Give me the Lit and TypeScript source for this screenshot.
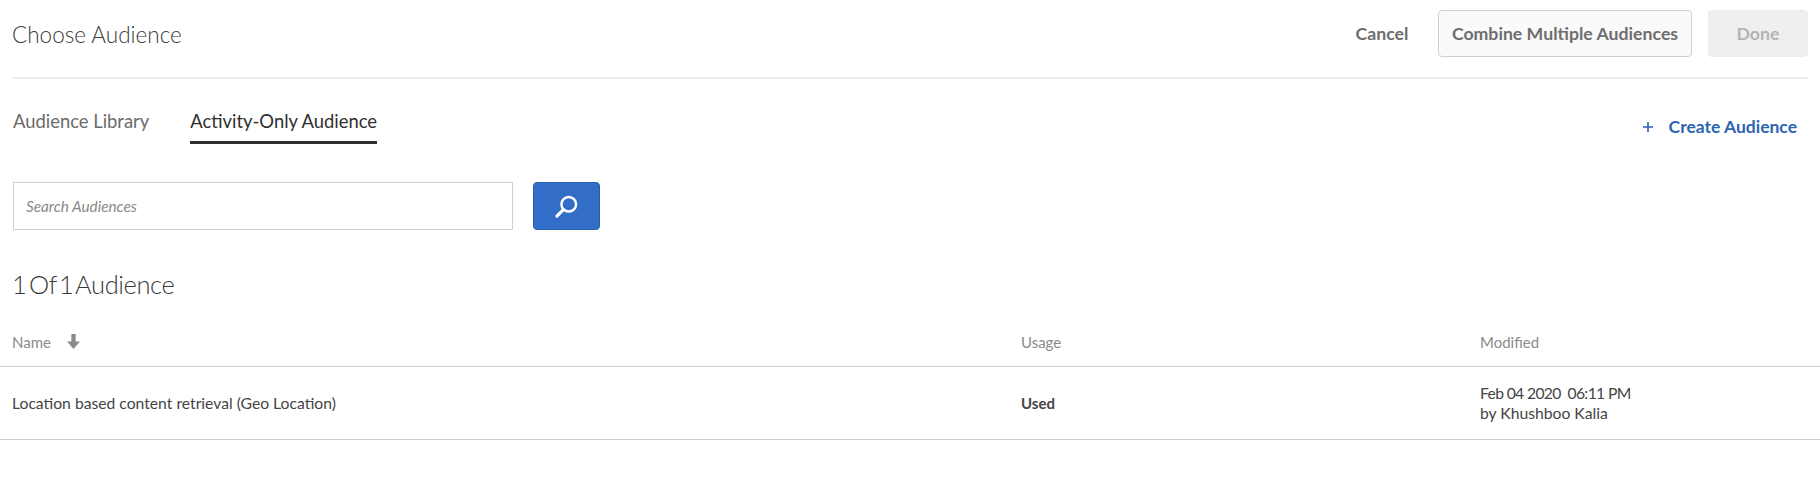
import { LitElement, css, html } from 'lit';
import { customElement } from 'lit/decorators.js';

@customElement('app-root')
export class AppRoot extends LitElement {
  static styles = css`
    :host {
      display: block;
      width: 1820px;
      height: 496px;
      background: #fff;
      font-family: 'Lato', 'Noto Sans', sans-serif;
      color: #4b4b4b;
      overflow: hidden;
    }
    .top {
      margin: 0 12px 0 12px;
      height: 79px;
      box-sizing: border-box;
      padding-top: 10px;
      border-bottom: 2px solid #eeeeee;
      display: flex;
      align-items: flex-start;
    }
    h1 {
      margin: 0;
      font-size: 22.5px;
      font-weight: 300;
      line-height: 50px;
      color: #3a3a3a;
      flex: 1;
    }
    .btn {
      box-sizing: border-box;
      height: 47px;
      border-radius: 4px;
      font-family: inherit;
      font-size: 17.7px;
      font-weight: 700;
      padding: 0;
      display: flex;
      align-items: center;
      justify-content: center;
    }
    .cancel {
      border: 0;
      background: none;
      color: #6e6e6e;
      width: 52px;
      margin-right: 30px;
    }
    .combine {
      width: 254px;
      margin-right: 16px;
      border: 1px solid #cfcfcf;
      background: #fafafa;
      color: #6e6e6e;
    }
    .done {
      width: 100px;
      border: 1px solid #ececec;
      background: #efefef;
      color: #b3b3b3;
    }
    .tabs {
      margin: 0 23px 0 13px;
      height: 66px;
      display: flex;
      align-items: flex-start;
    }
    .tab {
      font-size: 18.4px;
      line-height: 28px;
      margin-top: 28px;
      height: 37px;
      box-sizing: border-box;
      color: #6b6b6b;
    }
    .tab + .tab {
      margin-left: 41px;
      color: #2f2f2f;
      border-bottom: 3px solid #2f2f2f;
    }
    .create {
      margin-left: auto;
      margin-top: 34px;
      display: flex;
      align-items: center;
      gap: 16px;
      font-size: 17.5px;
      font-weight: 700;
      line-height: 28px;
      color: #2d63b3;
    }
    .search {
      margin: 37px 0 0 13px;
      display: flex;
      gap: 20px;
    }
    .field {
      box-sizing: border-box;
      width: 500px;
      height: 48px;
      border: 1px solid #cfcfcf;
      padding: 0 12px;
      display: flex;
      align-items: center;
      font-size: 15.3px;
      font-style: italic;
      color: #8a8a8a;
    }
    .go {
      box-sizing: border-box;
      width: 67px;
      height: 48px;
      border-radius: 4px;
      border: 1px solid #2a5fb0;
      background: #326ec8;
      display: flex;
      align-items: center;
      justify-content: center;
      padding: 0;
    }
    h2 {
      margin: 36px 0 0 12px;
      font-size: 25.5px;
      font-weight: 300;
      letter-spacing: -0.4px;
      word-spacing: -4px;
      line-height: 36px;
      color: #3a3a3a;
    }
    .row {
      display: grid;
      grid-template-columns: 1009px 459px 1fr;
      padding-left: 12px;
      box-sizing: border-box;
      align-items: center;
      border-bottom: 1px solid #cfcfcf;
    }
    .head {
      height: 65px;
      padding-top: 15px;
      font-size: 15px;
      color: #8a8a8a;
    }
    .body {
      height: 73px;
      font-size: 15.7px;
      line-height: 20px;
      color: #444;
    }
    .name {
      display: flex;
      align-items: center;
      gap: 16px;
    }
    .used {
      font-weight: 700;
      font-size: 15px;
    }
    .date {
      letter-spacing: -0.65px;
    }
  `;

  render() {
    return html`
      <div class="top">
        <h1>Choose Audience</h1>
        <button class="btn cancel">Cancel</button>
        <button class="btn combine">Combine Multiple Audiences</button>
        <button class="btn done">Done</button>
      </div>
      <div class="tabs">
        <div class="tab">Audience Library</div>
        <div class="tab">Activity-Only Audience</div>
        <div class="create">
          <svg width="10" height="10" viewBox="0 0 10 10">
            <path d="M5 0v10M0 5h10" stroke="#2d63b3" stroke-width="1.6" fill="none" />
          </svg>
          <span>Create Audience</span>
        </div>
      </div>
      <div class="search">
        <div class="field">Search Audiences</div>
        <button class="go" aria-label="Search">
          <svg width="27" height="27" viewBox="0 0 24 24" fill="none" stroke="#fff" stroke-linecap="round">
            <circle cx="14" cy="10" r="6.5" stroke-width="2.2" />
            <path d="M9.2 14.8 3.5 20.5" stroke-width="2.8" />
          </svg>
        </button>
      </div>
      <h2>1 Of 1 Audience</h2>
      <div class="row head">
        <div class="name">
          <span>Name</span>
          <svg width="13" height="15" viewBox="0 0 12 14">
            <path d="M4 0h4v7h4l-6 7-6-7h4z" fill="#8a8a8a" />
          </svg>
        </div>
        <div>Usage</div>
        <div>Modified</div>
      </div>
      <div class="row body">
        <div>Location based content retrieval (Geo Location)</div>
        <div class="used">Used</div>
        <div><span class="date">Feb 04 2020&nbsp; 06:11 PM</span><br />by Khushboo Kalia</div>
      </div>
    `;
  }
}
